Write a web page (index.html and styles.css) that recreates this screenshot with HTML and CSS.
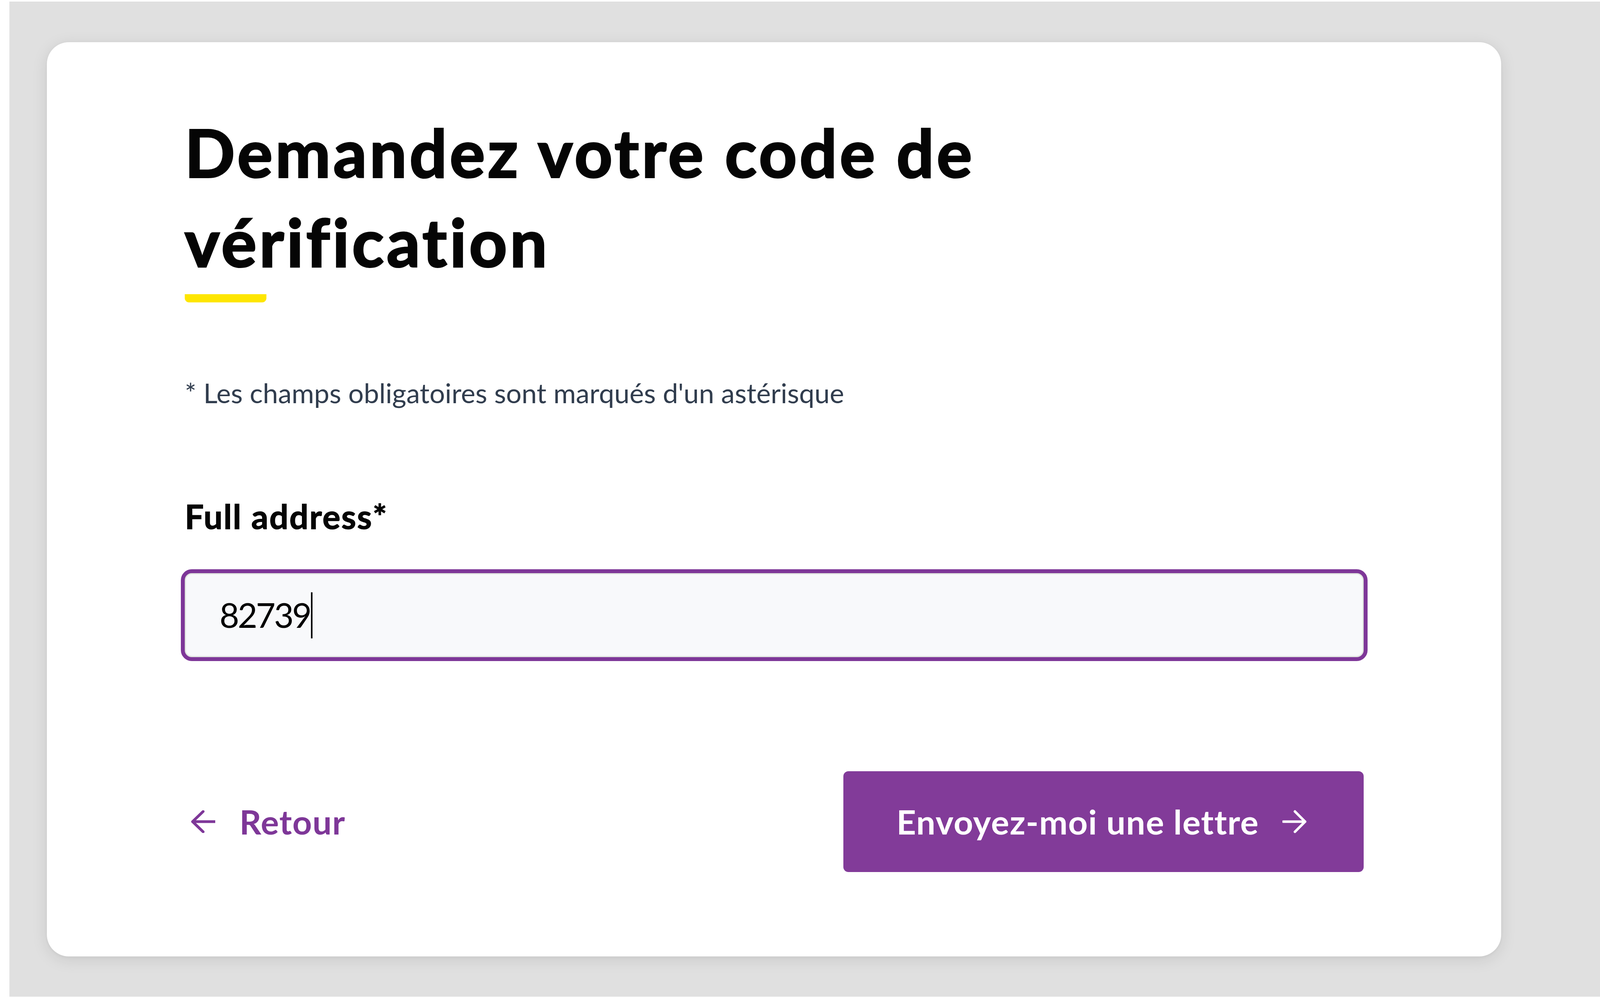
FILE: index.html
```html
<!DOCTYPE html>
<html lang="fr">
<head>
<meta charset="utf-8">
<title>Demandez votre code de vérification</title>
<link rel="stylesheet" href="styles.css">
</head>
<body>
<div class="page">
  <main class="card">
    <h1 class="title">Demandez votre code de vérification</h1>
    <div class="title-bar"></div>
    <p class="note">* Les champs obligatoires sont marqués d'un astérisque</p>
    <label class="label" for="address">Full address*</label>
    <div class="field" id="address" role="textbox"><span class="value">82739</span><span class="caret"></span></div>
    <div class="actions">
      <a class="back" href="#">
        <svg class="back-icon" viewBox="0 0 62 58" aria-hidden="true"><path d="M61 29H4M31 3L4 29l27 26" fill="none" stroke="currentColor" stroke-width="7" stroke-linecap="round" stroke-linejoin="round"/></svg>
        <span>Retour</span>
      </a>
      <button class="primary" type="button">
        <span>Envoyez-moi une lettre</span>
        <svg class="next-icon" viewBox="0 0 62 60" aria-hidden="true"><path d="M2 30h56M32 4l26 26-26 26" fill="none" stroke="currentColor" stroke-width="6.5" stroke-linecap="round" stroke-linejoin="round"/></svg>
      </button>
    </div>
  </main>
</div>
</body>
</html>
```
FILE: styles.css
```css
html, body {
  margin: 0;
  padding: 0;
  background: #ffffff;
}

body {
  font-family: "Lato", "Noto Sans", sans-serif;
  font-variant-ligatures: none;
  color: #000;
}

.page {
  margin: 4px 0 0 24px;
  height: 2547px;
  box-sizing: border-box;
  background: #e0e0e0;
  padding: 104px 0 0 96px;
}

.card {
  width: 3723px;
  box-sizing: border-box;
  background: #ffffff;
  border-radius: 56px;
  box-shadow: 0 8px 40px rgba(0, 0, 0, 0.10), 0 2px 8px rgba(0, 0, 0, 0.04);
  padding: 166px 352px 216px 353px;
  display: flex;
  flex-direction: column;
}

.title {
  margin: 0;
  max-width: 2500px;
  font-size: 169px;
  line-height: 229px;
  font-weight: 700;
  letter-spacing: 7px;
  -webkit-text-stroke: 4px #050505;
  color: #050505;
}

.title-bar {
  width: 209px;
  height: 21px;
  margin-top: 21px;
  background: #fee600;
  border-radius: 0 0 11px 11px;
}

.note {
  margin: 180px 0 0;
  font-size: 70px;
  line-height: 102px;
  color: #313d4e;
}

.label {
  display: block;
  margin-top: 212px;
  font-size: 86px;
  line-height: 105px;
  font-weight: 700;
  letter-spacing: 2.5px;
  -webkit-text-stroke: 1.5px #050505;
  color: #050505;
}

.field {
  margin-top: 94px;
  height: 215px;
  box-sizing: border-box;
  border: 3px solid #e0e5df;
  border-radius: 18px;
  outline: 10px solid #7e3798;
  background: #f8f9fb;
  padding-left: 86px;
  display: flex;
  align-items: center;
  font-size: 87px;
  line-height: 1.2;
  letter-spacing: -4px;
  color: #000;
}

.caret {
  display: inline-block;
  width: 4px;
  height: 118px;
  margin-left: 2px;
  background: #000;
}

.actions {
  margin-top: 292px;
  display: flex;
  justify-content: space-between;
  align-items: center;
}

.back {
  display: flex;
  align-items: center;
  gap: 62px;
  padding-left: 16px;
  color: #7e3798;
  text-decoration: none;
  font-size: 87px;
  line-height: 1.2;
  font-weight: 700;
  letter-spacing: 1.5px;
}

.back-icon {
  width: 62px;
  height: 58px;
  display: block;
}

.primary {
  height: 258px;
  border: none;
  border-radius: 13px;
  background: #823b99;
  color: #ffffff;
  font-family: "Lato", "Noto Sans", sans-serif;
  font-variant-ligatures: none;
  font-size: 87px;
  line-height: 1.2;
  font-weight: 700;
  letter-spacing: 1.5px;
  padding: 0 146px 0 136px;
  display: flex;
  align-items: center;
  gap: 60px;
}

.next-icon {
  width: 62px;
  height: 60px;
  display: block;
}
```
